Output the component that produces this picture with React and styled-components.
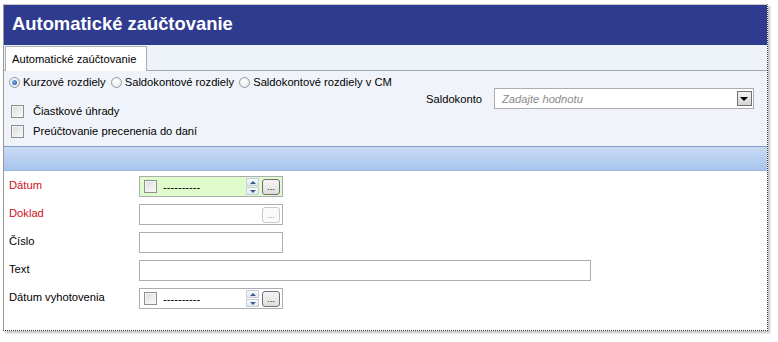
import React from 'react'
import styled, { createGlobalStyle } from 'styled-components'

const Global = createGlobalStyle`
  html, body {
    margin: 0;
    padding: 0;
    background: #fff;
  }
  body {
    font-family: "Liberation Sans", Arial, sans-serif;
    font-size: 11.2px;
    color: #000;
  }
`

const Page = styled.div`
  padding: 4px 0 0 3px;
  width: 778px;
  height: 342px;
  box-sizing: border-box;
`

const Window = styled.div`
  width: 765px;
  height: 327px;
  box-sizing: border-box;
  border-left: 1px solid #9a9a9a;
  border-top: 1px solid #c8c8c8;
  border-right: 1px dotted #333;
  border-bottom: 1px dotted #333;
  box-shadow: 2px 2px 2px rgba(0, 0, 0, 0.25);
  display: flex;
  flex-direction: column;
  background: #fff;
`

const Header = styled.div`
  height: 40px;
  background: #2e3b8f;
  color: #fff;
  font-family: "Liberation Sans", Arial, sans-serif;
  font-weight: bold;
  font-size: 18.4px;
  display: flex;
  align-items: center;
  padding-left: 8px;
  padding-bottom: 2px;
  box-sizing: border-box;
`

const TabStrip = styled.div`
  height: 26px;
  background: #eef2f9;
  border-bottom: 1px solid #a0a6b0;
  display: flex;
  align-items: flex-end;
  box-sizing: border-box;
  padding-left: 1px;
`

const Tab = styled.div`
  height: 25px;
  box-sizing: border-box;
  background: #fff;
  border: 1px solid #a9adb4;
  border-bottom: none;
  padding: 0 6px;
  display: flex;
  align-items: center;
  margin-bottom: -1px;
  width: 142px;
  white-space: nowrap;
`

const Options = styled.div`
  height: 75px;
  background: #f0f4fa;
  display: grid;
  grid-template-columns: 1fr 271px;
  padding: 3px 0 0 5px;
  box-sizing: border-box;
`

const OptionsLeft = styled.div`
  display: flex;
  flex-direction: column;
`

const RadioRow = styled.div`
  display: flex;
  align-items: center;
  height: 16px;
  gap: 5px;
  margin-bottom: 13px;
`

const RadioItem = styled.label`
  display: flex;
  align-items: center;
  gap: 3px;
`

const Radio = styled.span`
  width: 11px;
  height: 11px;
  border-radius: 50%;
  border: 1px solid #8f9aa8;
  background: radial-gradient(circle at 40% 40%, #fff, #dde2e8);
  display: inline-flex;
  align-items: center;
  justify-content: center;
  box-sizing: border-box;
  &::after {
    content: '';
    display: ${p => (p.checked ? 'block' : 'none')};
    width: 5px;
    height: 5px;
    border-radius: 50%;
    background: radial-gradient(circle at 35% 35%, #7ab0e8, #1c4f9a);
  }
`

const CheckRow = styled.label`
  display: flex;
  align-items: center;
  gap: 9px;
  height: 16px;
  margin-left: 2px;
  margin-bottom: 4px;
`

const Check = styled.span`
  width: 13px;
  height: 13px;
  box-sizing: border-box;
  border: 1px solid #8e8f8f;
  background: linear-gradient(135deg, #dcdcdc, #fafafa);
  box-shadow: inset 0 0 0 1px #f4f4f4;
  flex: none;
`

const OptionsRight = styled.div`
  display: flex;
  align-items: center;
  align-self: start;
  margin-top: 14px;
  margin-left: -70px;
  gap: 12px;
`

const Combo = styled.div`
  width: 260px;
  height: 21px;
  box-sizing: border-box;
  border: 1px solid #abadb3;
  background: #fff;
  display: flex;
  align-items: center;
  padding: 0 1px 0 7px;
`

const Placeholder = styled.span`
  flex: 1;
  color: #8a8a8a;
  font-style: italic;
`

const DropButton = styled.span`
  width: 15px;
  height: 15px;
  box-sizing: border-box;
  border: 1px solid #707070;
  background: linear-gradient(#f2f2f2, #d6d6d6);
  display: flex;
  align-items: center;
  justify-content: center;
  &::after {
    content: '';
    border-left: 4px solid transparent;
    border-right: 4px solid transparent;
    border-top: 4px solid #000;
  }
`

const BlueBar = styled.div`
  height: 25px;
  box-sizing: border-box;
  border-top: 1px solid #7f9cc9;
  border-bottom: 1px solid #9fb7dc;
  background: linear-gradient(#c9daf3, #a8c5ee);
`

const Form = styled.div`
  flex: 1;
  display: grid;
  grid-template-columns: 130px 1fr;
  grid-auto-rows: 21px;
  row-gap: 7px;
  padding: 5px 0 0 5px;
  align-items: center;
`

const Label = styled.span`
  color: ${p => (p.required ? '#d0121a' : '#000')};
  margin-top: -3px;
`

const Field = styled.div`
  width: ${p => p.width}px;
  height: 21px;
  box-sizing: border-box;
  border: 1px solid #abadb3;
  background: ${p => (p.green ? '#e0fbcc' : '#fff')};
  display: flex;
  align-items: center;
  padding: 0 2px 0 4px;
  gap: 6px;
`

const Dashes = styled.span`
  flex: 1;
`

const Spinner = styled.span`
  display: flex;
  flex-direction: column;
  gap: 1px;
  margin-right: -3px;
`

const SpinHalf = styled.span`
  width: 13px;
  height: 8px;
  box-sizing: border-box;
  border: 1px solid #c4cdd8;
  background: linear-gradient(#f8fafc, #e3e9f0);
  display: flex;
  align-items: center;
  justify-content: center;
  &::after {
    content: '';
    border-left: 3px solid transparent;
    border-right: 3px solid transparent;
    ${p => (p.up ? 'border-bottom: 3px solid #3a5a8a;' : 'border-top: 3px solid #3a5a8a;')}
  }
`

const DotsButton = styled.span`
  width: 18px;
  height: 16px;
  box-sizing: border-box;
  border: 1px solid ${p => (p.disabled ? '#c9c9c9' : '#707070')};
  border-radius: 3px;
  background: ${p => (p.disabled ? '#fafafa' : 'linear-gradient(#f6f6f6, #dcdcdc)')};
  color: ${p => (p.disabled ? '#a0a0a0' : '#000')};
  font-size: 9px;
  line-height: 10px;
  display: flex;
  align-items: flex-end;
  justify-content: center;
  padding-bottom: 2px;
  margin-left: auto;
`

const DateField = ({ green }) => (
  <Field width={144} green={green}>
    <Check />
    <Dashes>----------</Dashes>
    <Spinner>
      <SpinHalf up />
      <SpinHalf />
    </Spinner>
    <DotsButton>...</DotsButton>
  </Field>
)

const App = () => (
  <Page>
    <Global />
    <Window>
      <Header>Automatické zaúčtovanie</Header>
      <TabStrip>
        <Tab>Automatické zaúčtovanie</Tab>
      </TabStrip>
      <Options>
        <OptionsLeft>
          <RadioRow>
            <RadioItem><Radio checked />Kurzové rozdiely</RadioItem>
            <RadioItem><Radio />Saldokontové rozdiely</RadioItem>
            <RadioItem><Radio />Saldokontové rozdiely v CM</RadioItem>
          </RadioRow>
          <CheckRow><Check />Čiastkové úhrady</CheckRow>
          <CheckRow><Check />Preúčtovanie precenenia do daní</CheckRow>
        </OptionsLeft>
        <OptionsRight>
          <span>Saldokonto</span>
          <Combo>
            <Placeholder>Zadajte hodnotu</Placeholder>
            <DropButton />
          </Combo>
        </OptionsRight>
      </Options>
      <BlueBar />
      <Form>
        <Label required>Dátum</Label>
        <DateField green />
        <Label required>Doklad</Label>
        <Field width={144}>
          <DotsButton disabled>...</DotsButton>
        </Field>
        <Label>Číslo</Label>
        <Field width={144} />
        <Label>Text</Label>
        <Field width={452} />
        <Label>Dátum vyhotovenia</Label>
        <DateField />
      </Form>
    </Window>
  </Page>
)

export default App
